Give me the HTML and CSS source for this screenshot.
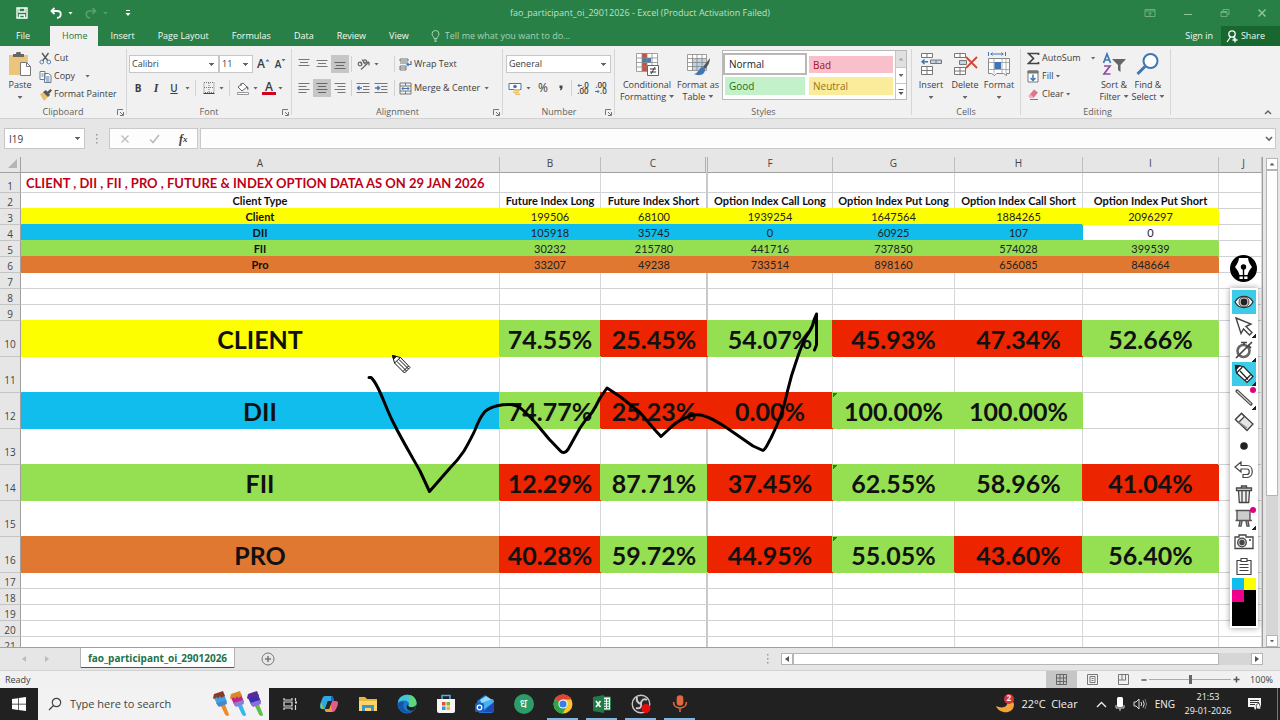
FILE: index.html
```html
<!DOCTYPE html>
<html lang="en">
<head>
<meta charset="utf-8">
<title>fao_participant_oi_29012026 - Excel</title>
<link rel="stylesheet" href="styles.css">
</head>
<body>
<header class="titlebar">
  <div class="quick">
    <button class="btn q-save" aria-label="Save"><svg width="12" height="12" viewBox="0 0 12 12" fill="none" stroke="#fff" stroke-width="1.4"><path d="M1 1h10v10H1zM3 1v4h6V1M3.5 11V8h5v3"/></svg></button>
    <button class="btn q-undo" aria-label="Undo"><svg width="12" height="12" viewBox="0 0 12 12" fill="none" stroke="#fff" stroke-width="1.8"><path d="M4.500 1L1.500 4l3 3M1.500 4H7c5 0 5 6.500 0 7"/></svg></button>
    <span class="caret caret-white"></span>
    <button class="btn q-redo" aria-label="Redo"><svg width="12" height="12" viewBox="0 0 12 12" fill="none" stroke="#5a9f71" stroke-width="1.600"><path d="M7.500 1l3 3-3 3M10.500 4H5C0 4 0 10.500 5 11"/></svg></button>
    <span class="caret caret-dim"></span>
    <button class="btn q-more" aria-label="Customize Quick Access Toolbar"><svg width="6" height="8" viewBox="0 0 6 8" fill="#fff"><path d="M1 1h4v1H1zM.5 4h5L3 7z"/></svg></button>
  </div>
  <h1 class="doc-title">fao_participant_oi_29012026 - Excel (Product Activation Failed)</h1>
  <div class="window-buttons">
    <button class="btn" aria-label="Ribbon Display Options"><svg width="12" height="10" viewBox="0 0 12 10" fill="none" stroke="#6fae83"><path d="M1 1.500h10v7H1zM1 3h10M6 8V4.500M4.500 6L6 4.500 7.500 6"/></svg></button>
    <button class="btn" aria-label="Minimize"><svg width="10" height="10" viewBox="0 0 10 10" stroke="#8fc3a0"><path d="M1 6.500h8"/></svg></button>
    <button class="btn" aria-label="Restore"><svg width="10" height="10" viewBox="0 0 10 10" fill="none" stroke="#6fae83"><path d="M1 3.500h6v5H1zM3 3V1.500h6v5H7.500M1 4.500h6"/></svg></button>
    <button class="btn" aria-label="Close"><svg width="10" height="10" viewBox="0 0 10 10" stroke="#8fc3a0" stroke-width="1.500"><path d="M1.500 1.500l7 7M8.500 1.500l-7 7"/></svg></button>
  </div>
</header>

<nav class="tabs">
  <button class="btn tab tab-file">File</button>
  <button class="btn tab tab-active">Home</button>
  <button class="btn tab">Insert</button>
  <button class="btn tab">Page Layout</button>
  <button class="btn tab">Formulas</button>
  <button class="btn tab">Data</button>
  <button class="btn tab">Review</button>
  <button class="btn tab">View</button>
  <label class="tellme"><svg width="9" height="12" viewBox="0 0 9 12" fill="none" stroke="#a5d2b2"><path d="M3 8.500C3 6.500 1 6 1 4a3.500 3.500 0 0 1 7 0c0 2-2 2.500-2 4.500zM3 10h3M3.500 11.500h2"/></svg><input type="text" aria-label="Tell me" placeholder="Tell me what you want to do..."></label>
  <button class="btn signin">Sign in</button>
  <button class="btn share"><svg width="12" height="13" viewBox="0 0 12 13" fill="none" stroke="#fff" stroke-width="1.300"><circle cx="6" cy="4" r="3.200"/><path d="M4.500 7L1 12M7 7l2 2M9 7.500v5M6.500 10h5"/></svg>Share</button>
</nav>

<section class="ribbon" aria-label="Home ribbon">
  <div class="group g-clipboard">
    <div class="content">
      <button class="btn big w-paste"><svg width="24" height="25" viewBox="0 0 24 25"><path d="M1 3h19v20H1z" fill="#e9c67c"/><path d="M5 5V2h3a2.500 2.500 0 0 1 5 0h3v3z" fill="#666"/><path d="M12.500 10.500h6l4 4v9h-10z" fill="#fff" stroke="#777"/><path d="M18.500 10.500v4h4" fill="none" stroke="#777"/></svg><span>Paste</span><span class="caret"></span></button>
      <div class="stack">
        <button class="btn small"><svg width="13" height="13" viewBox="0 0 13 13" fill="none"><path d="M3 1l6 8M9.500 1l-6 8" stroke="#555" stroke-width="1.300"/><circle cx="2.800" cy="10" r="1.900" stroke="#5c86ad"/><circle cx="9.800" cy="10" r="1.900" stroke="#5c86ad"/></svg>Cut</button>
        <button class="btn small"><svg width="13" height="13" viewBox="0 0 13 13" fill="#fff" stroke="#6d7b88"><path d="M1 1.500h5v8H1zM5.500 3.500h4l2.500 2v7H5.500z"/><path d="M2.500 4h2M2.500 6h2M7 7h3.500M7 9h3.500M7 11h3.500" stroke="#3f76b3"/></svg>Copy<span class="caret caret-gap"></span></button>
        <button class="btn small"><svg width="13" height="13" viewBox="0 0 13 13"><path d="M1 6l4-2 4 5-4 4z" fill="#e9bf72"/><path d="M4 4l3-2 4 5-2 2z" fill="#555"/><path d="M8 4l3.500-3L13 2.500 10 6z" fill="#555"/></svg>Format Painter</button>
      </div>
    </div>
    <div class="group-label">Clipboard<svg class="launch" width="7" height="7" viewBox="0 0 7 7" fill="none" stroke="#777"><path d="M.5 6V.5H6M3 3l3 3M6.500 3v3.500H3"/></svg></div>
  </div>

  <div class="group g-font">
    <div class="content rows">
      <div class="row">
        <select class="sel sel-font" aria-label="Font"><option>Calibri</option></select>
        <select class="sel sel-size" aria-label="Font size"><option>11</option></select>
        <button class="btn ic w17 grow-a" aria-label="Increase font size">A<svg width="5" height="12" viewBox="0 0 5 12"><path d="M.5 3.500L2.500 1l2 2.500z" fill="#3f76b3"/></svg></button>
        <button class="btn ic w17 shrink-a" aria-label="Decrease font size">A<svg width="5" height="12" viewBox="0 0 5 12"><path d="M.5 1h4l-2 2.500z" fill="#3f76b3"/></svg></button>
      </div>
      <div class="row">
        <button class="btn ic w18 letter"><b>B</b></button>
        <button class="btn ic w18 letter"><i>I</i></button>
        <button class="btn ic w18 letter"><u>U</u></button>
        <span class="caret"></span>
        <span class="sep sep-l"></span>
        <button class="btn ic w17" aria-label="Borders"><svg width="12" height="12" viewBox="0 0 12 12" fill="none" stroke="#777"><path d="M1 .5h10v10H1zM6 1v10M1 5.500h10" stroke-dasharray="1 1"/><path d="M.5 11.500h11" stroke="#444"/></svg></button>
        <span class="caret"></span>
        <span class="sep sep-l"></span>
        <button class="btn ic w17" aria-label="Fill color"><svg width="14" height="13" viewBox="0 0 14 13"><path d="M2 5l5-4 4 4-5 4z" fill="#fff" stroke="#666"/><path d="M5 4V1" stroke="#666"/><path d="M10.500 4c3 1 2 4 1.500 4-1 0-1-2-1.500-4" fill="#3f76b3"/><path d="M1.500 10.500h11v2h-11z" fill="#fff" stroke="#999"/></svg></button>
        <span class="caret"></span>
        <button class="btn ic fontcolor" aria-label="Font color">A</button>
        <span class="caret"></span>
      </div>
    </div>
    <div class="group-label">Font<svg class="launch" width="7" height="7" viewBox="0 0 7 7" fill="none" stroke="#777"><path d="M.5 6V.5H6M3 3l3 3M6.500 3v3.500H3"/></svg></div>
  </div>

  <div class="group g-align">
    <div class="content rows">
      <div class="row">
        <button class="btn ic w18" aria-label="Top align"><svg width="12" height="12" viewBox="0 0 12 12" stroke="#777"><path d="M.5 1.500h11M2 4.500h8M.5 7.500h11"/></svg></button>
        <button class="btn ic w18" aria-label="Middle align"><svg width="12" height="12" viewBox="0 0 12 12" stroke="#777"><path d="M.5 2.500h11M2 5.500h8M.5 8.500h11"/></svg></button>
        <button class="btn ic w18 on" aria-label="Bottom align"><svg width="12" height="12" viewBox="0 0 12 12" stroke="#666"><path d="M.5 4.500h11M2 7.500h8M.5 10.500h11"/></svg></button>
        <span class="sep"></span>
        <button class="btn ic w18" aria-label="Orientation"><svg width="13" height="12" viewBox="0 0 13 12" fill="none" stroke="#666" stroke-width="1.200"><path d="M4 11.500L12 4M12 4v3.500M12 4H8.500"/><circle cx="3" cy="6" r="1.800"/><path d="M5 7L3.500 4M5 1.500l3.500 5"/><circle cx="8" cy="3.500" r="1.600"/></svg></button>
        <span class="caret"></span>
        <span class="sep sep-r"></span>
        <button class="btn ic text-btn"><svg width="13" height="13" viewBox="0 0 13 13" fill="none" stroke="#777"><path d="M1 1h8v2H1zM1 5h8M1 8h6v4H1zM1 10h6"/><path d="M12 3v3.500H8M9.500 5L8 6.500 9.500 8" stroke="#3f76b3" stroke-width="1.200"/></svg>Wrap Text</button>
      </div>
      <div class="row">
        <button class="btn ic w18" aria-label="Align left"><svg width="12" height="12" viewBox="0 0 12 12" stroke="#777"><path d="M.5 1.500h11M.5 4.500h8M.5 7.500h11M.5 10.500h8"/></svg></button>
        <button class="btn ic w18 on" aria-label="Center"><svg width="12" height="12" viewBox="0 0 12 12" stroke="#666"><path d="M.5 1.500h11M2 4.500h8M.5 7.500h11M2 10.500h8"/></svg></button>
        <button class="btn ic w18" aria-label="Align right"><svg width="12" height="12" viewBox="0 0 12 12" stroke="#777"><path d="M.5 1.500h11M3.500 4.500h8M.5 7.500h11M3.500 10.500h8"/></svg></button>
        <span class="sep"></span>
        <button class="btn ic w18" aria-label="Decrease indent"><svg width="14" height="12" viewBox="0 0 14 12" stroke="#777"><path d="M.5 1.500h13M7 4.500h6.500M7 7.500h6.500M.5 10.500h13"/><path d="M6 6H1.500M3.500 4l-2 2 2 2" fill="none" stroke="#3f76b3" stroke-width="1.400"/></svg></button>
        <button class="btn ic w18" aria-label="Increase indent"><svg width="14" height="12" viewBox="0 0 14 12" stroke="#777"><path d="M.5 1.500h13M7 4.500h6.500M7 7.500h6.500M.5 10.500h13"/><path d="M1 6h4.500M3.500 4l2 2-2 2" fill="none" stroke="#3f76b3" stroke-width="1.400"/></svg></button>
        <span class="sep sep-m"></span>
        <button class="btn ic text-btn"><svg width="13" height="13" viewBox="0 0 13 13" fill="none" stroke="#777"><path d="M1 1h11v11H1zM1 4h11M1 9h11M6.500 1v3M6.500 9v3"/><path d="M3 6.500h7M4.500 5L3 6.500 4.500 8M8.500 5L10 6.500 8.500 8" stroke="#3f76b3"/></svg>Merge &amp; Center<span class="caret caret-gap"></span></button>
      </div>
    </div>
    <div class="group-label">Alignment<svg class="launch" width="7" height="7" viewBox="0 0 7 7" fill="none" stroke="#777"><path d="M.5 6V.5H6M3 3l3 3M6.500 3v3.500H3"/></svg></div>
  </div>

  <div class="group g-number">
    <div class="content rows">
      <div class="row"><select class="sel sel-num" aria-label="Number format"><option>General</option></select></div>
      <div class="row">
        <button class="btn ic w18" aria-label="Accounting format"><svg width="14" height="13" viewBox="0 0 14 13"><path d="M1 1.500h12v6H1z" fill="#fff" stroke="#3f76b3"/><circle cx="7" cy="4.500" r="1.800" fill="#3f76b3"/><path d="M6 7h6v2H6zM5 9.500h6V11H5zM7 11.500h5V13H7z" fill="#e9bf72"/></svg></button>
        <span class="caret"></span>
        <button class="btn ic w18 pct">%</button>
        <button class="btn ic w17 comma" aria-label="Comma style"><svg width="4" height="6" viewBox="0 0 4 6"><path d="M.5.5h3v2C3.500 4 2.500 5 1 5.500L1.500 3h-1z" fill="#444"/></svg></button>
        <span class="sep"></span>
        <button class="btn ic w18 dec" aria-label="Increase decimal"><span><svg width="5" height="5" viewBox="0 0 5 5" fill="none" stroke="#3f76b3"><path d="M5 2.500H1M2.500 1L1 2.500 2.500 4"/></svg>.0</span><span>.00</span></button>
        <button class="btn ic w18 dec" aria-label="Decrease decimal"><span>.00</span><span><svg width="5" height="5" viewBox="0 0 5 5" fill="none" stroke="#3f76b3"><path d="M0 2.500h4M2.500 1L4 2.500 2.500 4"/></svg>.0</span></button>
      </div>
    </div>
    <div class="group-label">Number<svg class="launch" width="7" height="7" viewBox="0 0 7 7" fill="none" stroke="#777"><path d="M.5 6V.5H6M3 3l3 3M6.500 3v3.500H3"/></svg></div>
  </div>

  <div class="group g-styles">
    <div class="content">
      <button class="btn big w-cf"><svg width="25" height="25" viewBox="0 0 25 25"><path d="M1.500 1.500h21v18h-21z" fill="#fff"/><path d="M7 1h5v5H7zM7 11h5v8H7z" fill="#c9523f"/><path d="M7 6h9v5H7z" fill="#4b7ba8"/><path d="M1.500 1.500h21v18h-21zM1.500 6h21M1.500 10.500h21M1.500 15h21M7 1.500v18M12 1.500v18M17 1.500v18" fill="none" stroke="#8b8b8b" stroke-width=".8"/><path d="M12.500 13.500h11v10h-11z" fill="#fff" stroke="#666"/><path d="M15 17h6M15 20h6M20 15l-4 7" stroke="#333"/></svg><span>Conditional</span><span>Formatting<span class="caret"></span></span></button>
      <button class="btn big w-ft"><svg width="25" height="25" viewBox="0 0 25 25"><path d="M1.500 2.500h19v16h-19z" fill="#fff"/><path d="M6 7h14v11H6z" fill="#bcd2e6"/><path d="M1.500 2.500h19v16h-19zM1.500 6.500h19M1.500 10.500h19M1.500 14.500h19M6.500 2.500v16M11 2.500v16M16 2.500v16" fill="none" stroke="#858585" stroke-width=".8"/><path d="M24 6l-7 9 2 2c3-3 5-7 5-11" fill="#555"/><path d="M17 15c-4 0-4 6-9 7 4 2 11 2 11-5z" fill="#3f76b3"/></svg><span>Format as</span><span>Table<span class="caret"></span></span></button>
      <div class="gallery">
        <div class="swatches">
          <button class="btn sw normal">Normal</button><button class="btn sw bad">Bad</button>
          <button class="btn sw good">Good</button><button class="btn sw neutral">Neutral</button>
        </div>
        <div class="gal-scroll">
          <button class="btn off" aria-label="Scroll up"><span class="caret up"></span></button>
          <button class="btn" aria-label="Scroll down"><span class="caret"></span></button>
          <button class="btn" aria-label="More styles"><svg width="6" height="8" viewBox="0 0 6 8" fill="#555"><path d="M.5 1h5v1h-5zM.5 4h5L3 7z"/></svg></button>
        </div>
      </div>
    </div>
    <div class="group-label">Styles</div>
  </div>

  <div class="group g-cells">
    <div class="content">
      <button class="btn big w34"><svg width="24" height="25" viewBox="0 0 24 25" fill="#fff" stroke="#777"><path d="M2.500 1.500h11v4h-11zM8 1.500v4M2.500 14.500h11v8h-11zM8 14.500v8M2.500 18.500h11"/><path d="M11.500 8h11v3.500h-11zM17 8v3.500" fill="#c3d4e4"/><path d="M9 9.700H3M5.500 7.500L3 9.700 5.500 12" fill="none" stroke="#3f76b3" stroke-width="1.400"/></svg><span>Insert</span><span class="caret"></span></button>
      <button class="btn big w34"><svg width="26" height="25" viewBox="0 0 26 25" fill="#fff" stroke="#777"><path d="M2.500 1.500h11v4h-11zM8 1.500v4M2.500 15.500h11v7h-11zM8 15.500v7M2.500 19h11"/><path d="M7.500 8.500h7v4h-7z" fill="#c3d4e4"/><path d="M14 5l11 11M25 5L14 16" stroke="#cf4a38" stroke-width="1.800"/></svg><span>Delete</span><span class="caret"></span></button>
      <button class="btn big w34"><svg width="25" height="25" viewBox="0 0 25 25"><path d="M1.500 6.500h21v15h-3v2l-3-2h-7l-2 2-3-2h-3z" fill="#fff" stroke="#888"/><path d="M1.500 10.500h21M1.500 17.500h21M7 6.500v15M15 6.500v15M19 6.500v15" stroke="#999" stroke-width=".8"/><path d="M7.500 10h6.500v7H7.500z" fill="#3f76b3"/><path d="M1.500 0v4M18.500 0v4M3.500 2h13M5.500.5L4 2l1.500 1.500M14.500.5L16 2l-1.500 1.500" fill="none" stroke="#3f76b3"/></svg><span>Format</span><span class="caret"></span></button>
    </div>
    <div class="group-label">Cells</div>
  </div>

  <div class="group g-edit">
    <div class="content">
      <div class="stack stack-edit">
        <button class="btn small"><svg width="13" height="13" viewBox="0 0 13 13" fill="none" stroke="#444" stroke-width="1.700"><path d="M11.500 3V1.500H1.500l5 5-5 5h10V10"/></svg>AutoSum<span class="caret caret-gap"></span></button>
        <button class="btn small"><svg width="13" height="13" viewBox="0 0 13 13" fill="#fff" stroke="#777"><path d="M1 1h10v11H1z"/><path d="M1 1h10v2H1z" fill="#777"/><path d="M6 4.500v6M3.500 8L6 10.500 8.500 8" fill="none" stroke="#3f76b3" stroke-width="1.500"/></svg>Fill<span class="caret"></span></button>
        <button class="btn small"><svg width="13" height="13" viewBox="0 0 13 13"><path d="M1.500 8L7 1.500l4 3L6.500 10H3z" fill="#e0748c"/><path d="M1.500 8L3 6.300 7 9.500 6.500 10H3z" fill="#f0b3bf"/><path d="M3 11.500h8" stroke="#777"/></svg>Clear<span class="caret"></span></button>
      </div>
      <button class="btn big w34"><svg width="25" height="25" viewBox="0 0 25 25" fill="none"><path d="M1.500 11L5 2l3.500 9M2.700 8h4.600" stroke="#3f76b3" stroke-width="1.700"/><path d="M2 14h6l-6 8h6.500" stroke="#8d4bab" stroke-width="1.700"/><path d="M10 7h14l-5.500 6v7L16 18v-5z" fill="#666"/></svg><span>Sort &amp;</span><span>Filter<span class="caret"></span></span></button>
      <button class="btn big w34"><svg width="24" height="25" viewBox="0 0 24 25"><circle cx="14.500" cy="9" r="7" fill="#fff" stroke="#3f76b3" stroke-width="2"/><path d="M9 14.500L1.500 22" stroke="#3f76b3" stroke-width="3"/></svg><span>Find &amp;</span><span>Select<span class="caret"></span></span></button>
    </div>
    <div class="group-label">Editing</div>
  </div>
  <button class="btn collapse" aria-label="Collapse the ribbon"><svg width="8" height="6" viewBox="0 0 8 6" fill="none" stroke="#666" stroke-width="1.500"><path d="M1 5l3-3 3 3"/></svg></button>
</section>

<div class="formula-bar">
  <select class="sel namebox" aria-label="Name box"><option>I19</option></select>
  <svg class="dots" width="4" height="12" viewBox="0 0 4 12" fill="#999"><path d="M1 1h1.500v1.500H1zM1 5h1.500v1.500H1zM1 9h1.500v1.500H1z"/></svg>
  <div class="fx-buttons">
    <button class="btn" aria-label="Cancel"><svg width="10" height="10" viewBox="0 0 10 10" stroke="#bcbcbc" stroke-width="1.300"><path d="M1.500 1.500l7 7M8.500 1.500l-7 7"/></svg></button>
    <button class="btn" aria-label="Enter"><svg width="11" height="10" viewBox="0 0 11 10" fill="none" stroke="#bcbcbc" stroke-width="1.700"><path d="M1 5.500L4 8.500 10 1"/></svg></button>
    <button class="btn fx" aria-label="Insert function">f<small>x</small></button>
  </div>
  <label class="formula"><input type="text" aria-label="Formula"><svg width="8" height="6" viewBox="0 0 8 6" fill="none" stroke="#666" stroke-width="1.600"><path d="M1 1l3 3 3-3"/></svg></label>
</div>

<main class="workbook">
  <div class="sheet">
    <table class="grid">
      <colgroup><col class="c-h"><col class="c-a"><col class="c-b"><col class="c-c"><col class="c-f"><col class="c-g"><col class="c-hh"><col class="c-i"><col></colgroup>
      <thead><tr><th class="corner"><svg width="10" height="10" viewBox="0 0 10 10"><path d="M9 0v9H0z" fill="#b5b5b5"/></svg></th><th>A</th><th>B</th><th class="dbl">C</th><th>F</th><th>G</th><th>H</th><th>I</th><th class="last">J</th></tr></thead>
      <tbody>
        <tr class="r-title"><th>1</th><td class="title">CLIENT , DII , FII , PRO , FUTURE &amp; INDEX OPTION DATA AS ON 29 JAN 2026</td><td></td><td class="dbl"></td><td></td><td></td><td></td><td></td><td></td></tr>
        <tr class="heads"><th>2</th><td>Client Type</td><td>Future Index Long</td><td class="dbl">Future Index Short</td><td>Option Index Call Long</td><td>Option Index Put Long</td><td>Option Index Call Short</td><td>Option Index Put Short</td><td></td></tr>
        <tr><th>3</th><td class="y b">Client</td><td class="y">199506</td><td class="y">68100</td><td class="y">1939254</td><td class="y">1647564</td><td class="y">1884265</td><td class="y">2096297</td><td></td></tr>
        <tr><th>4</th><td class="c b">DII</td><td class="c">105918</td><td class="c">35745</td><td class="c">0</td><td class="c">60925</td><td class="c">107</td><td>0</td><td></td></tr>
        <tr><th>5</th><td class="g b">FII</td><td class="g">30232</td><td class="g">215780</td><td class="g">441716</td><td class="g">737850</td><td class="g">574028</td><td class="g">399539</td><td></td></tr>
        <tr><th>6</th><td class="o b">Pro</td><td class="o">33207</td><td class="o">49238</td><td class="o">733514</td><td class="o">898160</td><td class="o">656085</td><td class="o">848664</td><td></td></tr>
        <tr><th>7</th><td></td><td></td><td class="dbl"></td><td></td><td></td><td></td><td></td><td></td></tr>
        <tr><th>8</th><td></td><td></td><td class="dbl"></td><td></td><td></td><td></td><td></td><td></td></tr>
        <tr><th>9</th><td></td><td></td><td class="dbl"></td><td></td><td></td><td></td><td></td><td></td></tr>
        <tr class="tall"><th>10</th><td class="y">CLIENT</td><td class="g">74.55%</td><td class="r">25.45%</td><td class="g">54.07%</td><td class="r flag">45.93%</td><td class="r">47.34%</td><td class="g">52.66%</td><td></td></tr>
        <tr class="tall"><th>11</th><td></td><td></td><td class="dbl"></td><td></td><td></td><td></td><td></td><td></td></tr>
        <tr class="tall"><th>12</th><td class="c">DII</td><td class="g">74.77%</td><td class="r">25.23%</td><td class="r">0.00%</td><td class="g flag">100.00%</td><td class="g">100.00%</td><td></td><td></td></tr>
        <tr class="tall"><th>13</th><td></td><td></td><td class="dbl"></td><td></td><td></td><td></td><td></td><td></td></tr>
        <tr class="tall"><th>14</th><td class="g">FII</td><td class="r">12.29%</td><td class="g">87.71%</td><td class="r">37.45%</td><td class="g flag">62.55%</td><td class="g">58.96%</td><td class="r">41.04%</td><td></td></tr>
        <tr class="tall"><th>15</th><td></td><td></td><td class="dbl"></td><td></td><td></td><td></td><td></td><td></td></tr>
        <tr class="tall"><th>16</th><td class="o">PRO</td><td class="r">40.28%</td><td class="g">59.72%</td><td class="r">44.95%</td><td class="g flag">55.05%</td><td class="r">43.60%</td><td class="g">56.40%</td><td></td></tr>
        <tr><th>17</th><td></td><td></td><td class="dbl"></td><td></td><td></td><td></td><td></td><td></td></tr>
        <tr><th>18</th><td></td><td></td><td class="dbl"></td><td></td><td></td><td></td><td></td><td></td></tr>
        <tr><th>19</th><td></td><td></td><td class="dbl"></td><td></td><td></td><td></td><td></td><td></td></tr>
        <tr><th>20</th><td></td><td></td><td class="dbl"></td><td></td><td></td><td></td><td></td><td></td></tr>
        <tr><th>21</th><td></td><td></td><td class="dbl"></td><td></td><td></td><td></td><td></td><td></td></tr>
      </tbody>
    </table>
  </div>
  <div class="vscroll">
    <button class="btn sb" aria-label="Scroll up"><span class="caret up"></span></button>
    <div class="vtrack"><div class="vthumb"></div></div>
    <button class="btn sb" aria-label="Scroll down"><span class="caret"></span></button>
  </div>

  <svg class="ink" width="480" height="200" viewBox="360 300 480 200" fill="none" stroke="#000" stroke-width="3" stroke-linecap="round" stroke-linejoin="round"><path d="M369 377.500L371 377.500C374 380 376 384 378 388C383 398 387 410 393 422C402 440 411 455 420 471L429.500 491.500L450 468C455 463 460 457 464 451C468 444 472 437 475 430C478 422 481 416 485 411.500C491 406 503 404 511 404.500C518 405.500 521 408 526 413C531 418 535 422 539 427L549 439L560 450.500Q564 455 568 449.500L580 428L587 418C592 415 597 404 600 398L607 388L620 396.500L640 412.500L655 430L661 436.500L668 430C673 425 678 421 683 419C692 414 701 414 707 417C714 419 720 424 727 428L753 446L763 450.500C766 449 768 443 771 438C778 424 784 408 787 393C790 380 793 370 797 359C800 350 803 342 806 337C810 330 813 328 814 320L816.500 314V345L814.500 350"/></svg>
  <svg class="cursor" width="21" height="21" viewBox="0 0 21 21" fill="#fff" stroke="#111" stroke-linejoin="round"><path d="M1.500 1.500l8 2 9.500 10-5.500 5.500L3.500 9z"/><path d="M3.500 9l6-5.500M6 7.500l9.500 9.500M8 5.500L17.500 15M12 17.500l5.500-5.500" fill="none"/><path d="M1.500 1.500l4 1-3 2.500z" fill="#111"/></svg>

  <svg class="nib" width="27" height="27" viewBox="0 0 27 27"><circle cx="13.500" cy="13.500" r="13.500"/><path d="M9 3h9c.5 4 2 6.500 4 9-3 3.500-4 6-4.500 8h-8C9 18 8 15.500 5 12c2-2.500 3.500-5 4-9zM9.500 21.500h8V24h-8z" fill="#fff"/><circle cx="13.500" cy="12" r="2.700"/><path d="M13.500 12v12" stroke="#000" stroke-width="1.400"/></svg>
  <div class="pen-tools" role="toolbar" aria-label="Pen tools">
    <button class="btn tool lit" aria-label="Show ink"><svg width="20" height="16" viewBox="0 0 20 16"><path d="M1 8c4-7.500 14-7.500 18 0-4 7.500-14 7.500-18 0z" fill="#fff" stroke="#333" stroke-width="1.300"/><circle cx="10" cy="8" r="5" fill="#ddd" stroke="#444"/><circle cx="10" cy="8" r="3.400" fill="#222"/></svg></button>
    <button class="btn tool more" aria-label="Select"><svg width="20" height="20" viewBox="0 0 20 20" fill="#fff" stroke="#444" stroke-width="1.400"><path d="M2 2l15 6-5 2.500 6 6-2.500 2.500-6-6-2.500 4.500z"/></svg></button>
    <button class="btn tool more" aria-label="Timer"><svg width="20" height="20" viewBox="0 0 20 20" fill="none" stroke="#444"><circle cx="9.500" cy="11" r="6" stroke-width="2.600" stroke="#666"/><path d="M7 2.500h6M10 3v2M14 5l3 3" stroke-width="1.700"/><path d="M2 18L18 2" stroke-width="1.700"/></svg></button>
    <button class="btn tool lit more" aria-label="Pencil"><svg width="20" height="20" viewBox="0 0 20 20" fill="#fff" stroke="#222" stroke-width="1.200"><path d="M1.500 1.500l8 1 9.500 10-6 6L2.500 9z"/><path d="M2.500 9l6-6M6 7l8 8.500M11 16.500l5.500-5.500" fill="none"/><path d="M1.500 1.500h4l-3.500 4z" fill="#222"/></svg></button>
    <button class="btn tool more dot" aria-label="Line"><svg width="20" height="20" viewBox="0 0 20 20" fill="none"><path d="M3 3l14 13" stroke="#444" stroke-width="3.200" stroke-linecap="round"/><path d="M3 3l14 13" stroke="#ccc" stroke-width="1.200"/></svg></button>
    <button class="btn tool" aria-label="Eraser"><svg width="20" height="20" viewBox="0 0 20 20" fill="#e6e6e6" stroke="#444" stroke-width="1.300"><path d="M1.500 7.500l6-6L19 12l-6 6.500z"/><path d="M1.500 7.500l6-6 3 3-6 6z" fill="#fff"/><path d="M4.500 10l8.500 6" stroke="#888"/></svg></button>
    <button class="btn tool" aria-label="Pen size"><svg width="8" height="8" viewBox="0 0 8 8"><circle cx="4" cy="4" r="3.800" fill="#222"/></svg></button>
    <button class="btn tool" aria-label="Undo ink"><svg width="20" height="18" viewBox="0 0 20 18" fill="#fff" stroke="#444" stroke-width="1.200"><path d="M1 6l6-5v3.500h6c7 0 7 12 0 12H9v-3h4c3 0 3-5.500 0-5.500H7v3z"/></svg></button>
    <button class="btn tool" aria-label="Delete ink"><svg width="18" height="19" viewBox="0 0 18 19" fill="#eee" stroke="#444" stroke-width="1.300"><path d="M3.500 5.500h11l-.8 12H4.300zM1.500 3h15v2.500h-15zM6.500 3V1h5v2M7 6v11M11 6v11"/></svg></button>
    <button class="btn tool more dot" aria-label="Whiteboard"><svg width="20" height="20" viewBox="0 0 20 20" fill="#ccc" stroke="#555" stroke-width="1.400"><path d="M3 2.500h13v10H3zM1.500 2.500H3M16 12.500h2M1.500 12.500H3M6 13l-1 5h2l1-5M12 13l1 5h2l-1-5"/></svg></button>
    <button class="btn tool" aria-label="Screenshot"><svg width="20" height="16" viewBox="0 0 20 16" fill="#fff" stroke="#444" stroke-width="1.300"><path d="M1 3h4V1h7v2h7v11.500H1z"/><circle cx="8" cy="8.500" r="4.300" fill="#ccc"/><circle cx="8" cy="8.500" r="2" fill="#444"/><path d="M15 6h2"/></svg></button>
    <button class="btn tool" aria-label="Clipboard"><svg width="18" height="19" viewBox="0 0 18 19" fill="#fff" stroke="#444" stroke-width="1.200"><path d="M2 3.500h14v14H2z"/><path d="M6 1.500h6v3H6zM4.500 7.500h9M4.500 10.500h9M4.500 13.500h9"/></svg></button>
    <div class="inks"><span class="ink-cyan"></span><span class="ink-yellow"></span><span class="ink-pink"></span></div>
  </div>
</main>

<div class="sheet-bar">
  <div class="sheet-nav"><svg width="4" height="6" viewBox="0 0 4 6" fill="#bbb"><path d="M4 0v6L0 3z"/></svg><svg width="4" height="6" viewBox="0 0 4 6" fill="#bbb"><path d="M0 0v6l4-3z"/></svg></div>
  <button class="btn sheet-tab">fao_participant_oi_29012026</button>
  <button class="btn add-sheet" aria-label="New sheet"><svg width="14" height="14" viewBox="0 0 14 14" fill="none" stroke="#777"><circle cx="7" cy="7" r="6"/><path d="M7 4v6M4 7h6" stroke-width="1.500"/></svg></button>
  <svg class="hdots" width="4" height="12" viewBox="0 0 4 12" fill="#999"><path d="M1 1h1.500v1.500H1zM1 5h1.500v1.500H1zM1 9h1.500v1.500H1z"/></svg>
  <div class="hscroll">
    <button class="btn sb" aria-label="Scroll left"><svg width="4" height="6" viewBox="0 0 4 6" fill="#555"><path d="M4 0v6L0 3z"/></svg></button>
    <div class="htrack"><div class="hthumb"></div></div>
    <button class="btn sb" aria-label="Scroll right"><svg width="4" height="6" viewBox="0 0 4 6" fill="#555"><path d="M0 0v6l4-3z"/></svg></button>
  </div>
</div>

<div class="status">
  <span class="ready">Ready</span>
  <button class="btn view on" aria-label="Normal view"><svg width="11" height="11" viewBox="0 0 11 11" fill="none" stroke="#666"><path d="M.5.5h10v10H.5zM.5 4h10M.5 7.500h10M4 .5v10M7.500.5v10"/></svg></button>
  <button class="btn view" aria-label="Page layout view"><svg width="11" height="11" viewBox="0 0 11 11" fill="none" stroke="#777"><path d="M.5.5h10v10H.5zM3 2.500h5v6H3zM4.500 4.500h2M4.500 6.500h2"/></svg></button>
  <button class="btn view" aria-label="Page break view"><svg width="11" height="11" viewBox="0 0 11 11" fill="none" stroke="#777"><path d="M.5.5h10v10H.5zM4 .5v5.500M7.500.5V6M.5 6H8"/></svg></button>
  <button class="btn zoom-b" aria-label="Zoom out"><svg width="6" height="6" viewBox="0 0 6 6"><path d="M.5 3h5" stroke="#555" stroke-width="1.500"/></svg></button>
  <input class="zoom" type="range" aria-label="Zoom" min="0" max="100" value="50">
  <button class="btn zoom-b" aria-label="Zoom in"><svg width="7" height="7" viewBox="0 0 7 7"><path d="M.5 3.500h6M3.500.5v6" stroke="#555" stroke-width="1.500"/></svg></button>
  <span class="zoom-pct">100%</span>
</div>

<footer class="taskbar">
  <button class="btn start" aria-label="Start"><svg width="14" height="14" viewBox="0 0 14 14" fill="#fff"><path d="M0 2l6-.8v5.500H0zM6.700 1.100L14 0v6.700H6.700zM0 7.400h6v5.500L0 12zM6.700 7.400H14V14l-7.300-1.100z"/></svg></button>
  <label class="search"><svg width="14" height="14" viewBox="0 0 14 14" fill="none" stroke="#444" stroke-width="1.200"><circle cx="8.500" cy="5.500" r="4.200"/><path d="M5.500 8.500L1 13"/></svg><input type="text" placeholder="Type here to search" aria-label="Search">
    <svg width="52" height="28" viewBox="0 0 52 28"><g><path d="M8 14l5 10.500q3 3 4 0L12 12z" fill="#f08a24"/><path d="M2 8l10-4 3 8-9 4z" fill="#3ca7e0"/><path d="M1 8l1-4 9-3 2 5-4 2-1-2-2 3-1-2-3 2z" fill="#8a3b2e"/><path d="M4 13l10-3 1 4-8 3z" fill="#4a86cf"/></g><g transform="translate(17)"><path d="M8 14l5 10.500q3 3 4 0L12 12z" fill="#36b7e8"/><path d="M2 8l10-4 3 8-9 4z" fill="#c82382"/><path d="M1 8l1-4 9-3 2 5-4 2-1-2-2 3-1-2-3 2z" fill="#d88b25"/><path d="M4 13l10-3 1 4-8 3z" fill="#8a7ddd"/></g><g transform="translate(34)"><path d="M8 14l5 10.500q3 3 4 0L12 12z" fill="#5fbf4a"/><path d="M2 8l10-4 3 8-9 4z" fill="#3232ac"/><path d="M1 8l1-4 9-3 2 5-4 2-1-2-2 3-1-2-3 2z" fill="#5a2a9c"/><path d="M4 13l10-3 1 4-8 3z" fill="#8d6be0"/></g></svg></label>
  <div class="apps">
    <button class="btn app" aria-label="Task view"><svg width="14" height="14" viewBox="0 0 14 14" fill="none" stroke="#ddd" stroke-width="1.200"><path d="M1 1v2h8V1M1 5h8v4H1zM1 13v-2h8v2M12.500 1v3M12.500 8v5"/><path d="M12 5.500h2" stroke-width="2"/></svg></button>
    <button class="btn app" aria-label="Copilot"><svg width="20" height="20" viewBox="0 0 20 20"><path d="M6 2h6c2 0 2 1 2.500 3L15 7H9L6 15H3c-3 0-2-4-1-7s2-6 4-6z" fill="#2fa8dc"/><path d="M2 8l3 7c-3 1-4-2-3-7z" fill="#8ac94a"/><path d="M14 18H8c-2 0-2-1-2.500-3H10l3-8h4c3 0 2 4 1 6s-2 5-4 5z" fill="#e25a8a"/><path d="M6 15h4l2-5 1 8H8c-1.500 0-1.700-1-2-3z" fill="#f29a3a"/><path d="M12 2c2 0 2.500 2 3 5h-3z" fill="#3656d4"/><path d="M9 7h4l-3 8H6z" fill="#262626"/></svg></button>
    <button class="btn app" aria-label="File Explorer"><svg width="18" height="16" viewBox="0 0 18 16"><path d="M0 1h6l2 2h10v12H0z" fill="#e9b53a"/><path d="M0 5h18v10H0z" fill="#fbd669"/><path d="M3 9h12v6h-3v-3H6v3H3z" fill="#3f95cf"/></svg></button>
    <button class="btn app" aria-label="Edge"><svg width="20" height="20" viewBox="0 0 20 20"><circle cx="10" cy="10" r="9.500" fill="#1c77c9"/><path d="M.8 9C2-2 19-2 19.500 9c0 5-7 5-8 3 2-3-1-5.500-4-5.500C4 6.500 1 8 .8 9z" fill="#41c6d8"/><path d="M13 1c5 2 7 6 6.300 9.500-1 3-6.500 3.500-7.800 1.500C13 9 12 5 13 1z" fill="#5fd67a"/><path d="M7 9c-3 5 2 10 8.500 8C10 21 1 18 1 10c2-3 6-3 6-1z" fill="#1555a5"/><path d="M11.500 12c1.300 2 6.800 1.500 7.800-1.500-.3 3-1.800 5-3 6-4 1-8-1-6-6z" fill="#212121"/></svg></button>
    <button class="btn app" aria-label="Store"><svg width="20" height="20" viewBox="0 0 20 20"><path d="M6 6V1.500h8V6" fill="none" stroke="#43b5e6" stroke-width="1.500"/><path d="M1 5h18v12q0 2-2 2H3q-2 0-2-2z" fill="#f5f5f5"/><path d="M6 8h3.500v3.500H6z" fill="#e5502f"/><path d="M10.500 8H14v3.500h-3.500z" fill="#7cb928"/><path d="M6 12.500h3.500V16H6z" fill="#1e9fdc"/><path d="M10.500 12.500H14V16h-3.500z" fill="#f7b71b"/></svg></button>
    <button class="btn app" aria-label="Outlook"><svg width="20" height="20" viewBox="0 0 20 20"><path d="M2 7l8-6 9 6v9q0 3-3 3H4z" fill="#2173d6"/><path d="M5 6l6-4 6 4-9 6z" fill="#8fdcf7"/><path d="M3 10l15-5 1 3-12 9z" fill="#49b0ee"/><path d="M19 8v10H8z" fill="#2348b8"/><rect y="9" width="9" height="9" rx="1.500" fill="#1a5cc0"/><circle cx="4.500" cy="13.500" r="2.300" fill="none" stroke="#fff" stroke-width="1.300"/></svg></button>
    <button class="btn app"><span class="dhan">ध</span></button>
    <button class="btn app run" aria-label="Chrome"><svg width="20" height="20" viewBox="0 0 20 20"><circle cx="10" cy="10" r="9.500" fill="#f9c52b"/><path d="M10 10L1.800 5.200a9.500 9.500 0 0 1 16.500.3H10z" fill="#e24334"/><path d="M10 10l-8.200-4.800A9.500 9.500 0 0 0 9.500 19.500L14 12z" fill="#2ba24c"/><circle cx="10" cy="10" r="4.600" fill="#fff"/><circle cx="10" cy="10" r="3.600" fill="#3b7de8"/></svg></button>
    <button class="btn app run" aria-label="Excel"><svg width="20" height="18" viewBox="0 0 20 18"><path d="M10 2h8.500v13H10z" fill="#f3f8f4" stroke="#2c8150"/><path d="M12 5h2M15 5h2M12 7.500h2M15 7.500h2M12 10h2M15 10h2M12 12.500h2M15 12.500h2" stroke="#2c8150" stroke-width="1.300"/><path d="M1 2l11-2v18L1 16z" fill="#1f7a45"/><path d="M4 6l4.500 6M8.500 6L4 12" stroke="#fff" stroke-width="1.600"/></svg></button>
    <button class="btn app run" aria-label="OBS"><svg width="20" height="20" viewBox="0 0 20 20"><circle cx="10" cy="10" r="8.800" fill="#2a2729" stroke="#c9c9c9" stroke-width="1.400"/><path d="M6 3c-1 4 1 6 4 7M16 6c-3-2-6 0-6 4M5 14c4 1 6-1 5-4" fill="none" stroke="#c9c9c9" stroke-width="2"/><circle cx="15" cy="14.500" r="4.500" fill="#e60d0d"/></svg></button>
    <button class="btn app run" aria-label="Voice recorder"><svg width="16" height="18" viewBox="0 0 16 18" fill="none" stroke="#e0693d" stroke-width="1.600"><rect x="5.500" y="1" width="5" height="9" rx="2.500" fill="#e0693d"/><path d="M1.500 7c0 8 13 8 13 0M8 13v4"/></svg></button>
  </div>
  <div class="tray">
    <button class="btn weather"><svg width="20" height="20" viewBox="0 0 20 20"><path d="M12 3c3 11-5 12-11 9 3 8 17 9 18-1 0-3-2-6-7-8z" fill="#f2a33a"/><circle cx="14" cy="5" r="5" fill="#d13438"/></svg><span class="badge">2</span>22°C&ensp;Clear</button>
    <button class="btn t-up" aria-label="Show hidden icons"><svg width="11" height="7" viewBox="0 0 11 7" fill="none" stroke="#eee" stroke-width="1.300"><path d="M1 6l4.500-4.500L10 6"/></svg></button>
    <button class="btn" aria-label="Microphone"><svg width="10" height="14" viewBox="0 0 10 14"><rect x="2" width="6" height="10" rx="1.500" fill="#fff"/><path d="M1 8v3h8V8M5 11v3" fill="none" stroke="#ddd"/></svg></button>
    <button class="btn" aria-label="Volume"><svg width="14" height="12" viewBox="0 0 14 12" fill="none" stroke="#ddd"><path d="M1 4h2l3-3v10L3 8H1zM8 4q1.500 2 0 4M10 2.500q2.500 3.500 0 7"/><path d="M12 1q3 5 0 10" stroke="#777"/></svg></button>
    <button class="btn lang">ENG</button>
    <button class="btn clock"><span>21:53</span><span>29-01-2026</span></button>
    <button class="btn notif" aria-label="Notifications"><svg width="14" height="14" viewBox="0 0 14 14"><path d="M0 1h13v9H9l-2 3-1-3H0z" fill="#f5f5f5"/><path d="M2 3.500h9M2 5.500h9M2 7.500h5" stroke="#333"/><path d="M8 8l3-2 2 6H9z" fill="#f5f5f5" stroke="#222" stroke-width=".7"/></svg></button>
  </div>
</footer>
</body>
</html>
```
FILE: styles.css
```css
* { box-sizing: border-box; }
html, body { height: 100%; }
body {
  margin: 0;
  display: flex;
  flex-direction: column;
  overflow: hidden;
  font: 9px/12px "Open Sans", "Noto Sans", sans-serif;
  color: #3c3c3c;
  background: #e6e6e6;
}
.btn {
  border: 0; margin: 0; padding: 0;
  background: none;
  font: inherit; color: inherit;
  display: flex; align-items: center; justify-content: center;
  white-space: nowrap;
}
svg { display: block; flex: none; }
input, select { font: inherit; color: inherit; border: 0; padding: 0; margin: 0; outline: 0; background: none; min-width: 0; }

.caret {
  display: inline-block; flex: none;
  width: 5px; height: 3px;
  background: #666;
  clip-path: polygon(0 0, 100% 0, 50% 100%);
}
.caret.up { clip-path: polygon(50% 0, 100% 100%, 0 100%); }
.caret-white { background: #fff; }
.caret-dim { background: #5a9f71; }
.caret-gap { margin-left: 8px; }

/* Title bar */
.titlebar { display: grid; grid-template-columns: 1fr auto 1fr; align-items: center; height: 26px; background: #298047; flex: none; }
.quick { display: flex; align-items: center; padding-left: 16px; }
.q-undo { margin-left: 22px; }
.q-undo + .caret { margin-left: 6px; }
.q-redo { margin-left: 12px; }
.q-redo + .caret { margin-left: 6px; }
.q-more { margin-left: 17px; }
.doc-title { margin: 0; font-size: 9px; font-weight: 400; color: #bfe0c9; }
.window-buttons { display: flex; justify-content: flex-end; gap: 27px; padding-right: 13px; }

/* Tabs */
.tabs { display: flex; height: 20px; background: #298047; color: #f2faf4; flex: none; }
.tab { padding: 0 11px 0 12px; }
.tab-file { width: 50px; padding: 0 16px 0 12px; }
.tab-active { background: #f1f1f1; color: #25733f; }
.tellme { display: flex; align-items: center; gap: 5px; padding-left: 11px; flex: 1; color: #a5d2b2; }
.tellme input { flex: 1; }
.tellme input::placeholder { color: #a5d2b2; }
.signin { padding: 0 8px; }
.share { gap: 3px; width: 59px; padding-right: 10px; background: #17672f; }

/* Ribbon */
.ribbon { display: flex; height: 73px; background: #f1f1f1; border-bottom: 1px solid #d2d2d2; flex: none; position: relative; }
.group { display: flex; flex-direction: column; padding-top: 2px; position: relative; }
.group::after { content: ""; position: absolute; right: 0; top: 3px; bottom: 3px; width: 1px; background: #d6d6d6; }
.g-clipboard { width: 127px; padding-left: 2px; }
.g-font { width: 165px; padding-left: 2px; }
.g-align { width: 211px; padding-left: 3px; }
.g-number { width: 112px; padding-left: 3px; }
.g-styles { width: 297px; padding-left: 3px; }
.g-cells { width: 109px; padding-left: 2px; }
.g-edit { width: 150px; padding-left: 6px; }
.content { display: flex; height: 58px; align-items: flex-start; flex: none; }
.group-label { position: relative; text-align: center; color: #5f5f5f; line-height: 12px; padding-right: 3px; }
.launch { position: absolute; right: 3px; top: 3px; }
.big { flex-direction: column; padding-top: 4px; justify-content: flex-start; }
.big > svg { margin-bottom: 2px; }
.big > .caret { margin-top: 5px; }
.big span .caret { margin-left: 3px; vertical-align: 2px; }
.w-paste { width: 36px; }
.w-cf { width: 58px; }
.w-ft { width: 44px; }
.w34 { width: 34px; }
.stack { display: grid; grid-template-rows: repeat(3, 18px); justify-items: start; padding: 1px 0 0 1px; }
.stack-edit { width: 70px; padding-left: 0; }
.small { gap: 2px; }
.rows { display: grid; grid-template-rows: 24px 24px; align-items: center; align-content: start; padding-top: 4px; }
.row { display: flex; align-items: center; }
.row .caret { margin-left: 2px; }
.w17 { width: 17px; height: 18px; }
.w18 { width: 18px; height: 18px; }
.on { background: #c6c6c6; }
.sel {
  appearance: none; height: 18px; border: 1px solid #c6c6c6; border-radius: 0; padding-left: 2px;
  background: linear-gradient(to bottom right, #666 50%, transparent 51%) no-repeat right 4px center / 3px 3px,
              linear-gradient(to bottom left, #666 50%, transparent 51%) no-repeat right 6px center / 3px 3px, #fff;
}
.sel-font { width: 90px; }
.sel-size { width: 34px; margin-right: 2px; }
.sel-num { width: 105px; }
.grow-a { font-size: 12px; font-weight: 600; }
.shrink-a { font-size: 10px; font-weight: 600; }
.letter { font-size: 10px; }
.letter i { font-family: "Liberation Serif", serif; font-weight: 700; font-size: 12px; }
.letter u { font-weight: 600; }
.sep { width: 1px; height: 16px; background: #d2d2d2; margin: 0 2px; }
.sep-l { margin: 0 4px 0 5px; }
.sep-r { margin-left: 15px; }
.sep-m { margin-left: 4px; }
.fontcolor { font-size: 12px; font-weight: 600; line-height: 12px; height: 14px; width: 14px; margin-left: 4px; border-bottom: 3px solid #d0021b; }
.text-btn { gap: 2px; margin-left: 2px; }
.pct { font-size: 12px; margin-left: 3px; }
.dec { flex-direction: column; font-size: 8px; line-height: 6px; font-weight: 600; }
.dec span { display: flex; align-items: center; }
.gallery { display: flex; flex: 1; margin: 2px 5px 0 2px; height: 50px; border: 1px solid #b9b9b9; background: #fff; font-size: 10px; }
.swatches { flex: 1; display: grid; grid-template-columns: 84px 1fr; grid-template-rows: 22px 22px; padding-top: 2px; }
.sw { justify-content: flex-start; margin: 2px; padding-left: 4px; }
.normal { border: 2px solid #b8b8b8; margin: 0; background: #fff; color: #222; }
.bad { background: #f9bfca; color: #a4101f; margin-top: 3px; }
.good { background: #c3f1ca; color: #1e7020; }
.neutral { background: #fbec9b; color: #97701a; }
.gal-scroll { display: grid; grid-template-rows: repeat(3, 1fr); width: 11px; border-left: 1px solid #c6c6c6; }
.gal-scroll .btn + .btn { border-top: 1px solid #c6c6c6; }
.gal-scroll .off { background: #e0e0e0; }
.gal-scroll .off .caret { background: #aaa; }
.collapse { margin: auto 8px 3px auto; }

/* Formula bar */
.formula-bar { display: flex; align-items: center; height: 38px; padding: 1px 4px 0 4px; flex: none; }
.namebox { width: 81px; height: 21px; font-size: 10px; padding-left: 4px; }
.dots { margin: 0 10px; }
.fx-buttons { display: flex; align-items: center; justify-content: space-around; width: 89px; height: 21px; background: #fdfdfd; border: 1px solid #c9c9c9; }
.fx { font: italic 700 12px/12px "Liberation Serif", serif; }
.fx small { font-size: 9px; }
.formula { display: flex; align-items: center; flex: 1; height: 21px; margin-left: 2px; padding-right: 2px; background: #fdfdfd; border: 1px solid #c9c9c9; }
.formula input { flex: 1; }

/* Grid */
.workbook { flex: 1; min-height: 0; display: flex; position: relative; border-bottom: 1px solid #a0a0a0; }
.sheet { flex: 1; overflow: hidden; border-right: 1px solid #a0a0a0; }
.grid { width: 100%; table-layout: fixed; border-collapse: separate; border-spacing: 0; background: #fff; font: 11px/12px Lato, sans-serif; color: #222; }
.c-h { width: 21px; } .c-a { width: 479px; } .c-b { width: 101px; } .c-c { width: 107px; } .c-f { width: 125px; }
.c-g { width: 122px; } .c-hh { width: 128px; } .c-i { width: 136px; }
.grid tr { height: 16px; }
.grid td { padding: 0; border-right: 1px solid #d6d7da; border-bottom: 1px solid #d0d1d4; text-align: center; white-space: nowrap; }
.grid th { position: relative; z-index: 1; padding: 0; background: #e6e6e6; font: 10px/12px "Open Sans", sans-serif; color: #444; border-bottom: 1px solid #c4c4c4; border-right: 1px solid #a0a0a0; vertical-align: bottom; }
.grid thead th { border-bottom-color: #a0a0a0; border-right-color: #bdbdbd; vertical-align: top; }
.grid .corner { border-right-color: #a0a0a0; }
.grid .last { padding-left: 7px; }
.corner svg { margin: 2px 0 0 8px; }
.grid .dbl { border-right: 2px solid #c9c9cb; }
.grid thead .dbl { border-right: 3px double #b0b0b0; }
.grid .r-title { height: 20px; }
.grid .tall { height: 36px; font: 700 25px/30px Lato, sans-serif; color: #111; }
.grid .tall th { padding-bottom: 6px; }
.grid .title { font-size: 13px; line-height: 16px; font-weight: 700; color: #c00018; text-align: left; padding-left: 5px; }
.heads td, .b { font-weight: 700; color: #111; }
.grid .y { background: #fdff00; border-color: #fdff00; box-shadow: -1px -1px #fdff00; }
.grid .c { background: #10bdec; border-color: #10bdec; box-shadow: -1px -1px #10bdec; }
.grid .g { background: #95e052; border-color: #95e052; box-shadow: -1px -1px #95e052; }
.grid .o { background: #e07832; border-color: #e07832; box-shadow: -1px -1px #e07832; }
.grid .r { background: #ec2400; border-color: #ec2400; box-shadow: -1px -1px #ec2400; }
.grid .flag { background-image: linear-gradient(135deg, #2b7a2b 3px, transparent 3px); }

.vscroll { width: 17px; padding: 1px 2px 0 3px; display: flex; flex-direction: column; }
.sb { width: 12px; height: 12px; background: #fff; border: 1px solid #b5b5b5; flex: none; }
.vtrack { flex: 1; background: #d6d6d6; }
.vthumb { height: 70%; background: #fff; border: 1px solid #b5b5b5; }

/* Ink drawn over the sheet */
.ink { position: absolute; left: 360px; top: 143px; pointer-events: none; }
.cursor { position: absolute; left: 391px; top: 197px; }
.nib { position: absolute; right: 23px; top: 98px; z-index: 2; }
.pen-tools { position: absolute; z-index: 2; right: 22px; top: 131px; width: 28px; padding: 2px; background: #fff; box-shadow: 0 0 6px #0006; }
.tool { width: 24px; height: 24px; position: relative; }
.lit { background: #3dcbe8; }
.more::after { content: ""; position: absolute; right: 0; bottom: 0; width: 5px; height: 5px; background: linear-gradient(135deg, transparent 50%, #222 51%); }
.dot::before { content: ""; position: absolute; right: 0; top: 1px; width: 6px; height: 6px; border-radius: 50%; background: #e0007f; }
.inks { display: grid; grid-template-columns: 12px 12px; grid-auto-rows: 12px; height: 48px; background: #000; }
.ink-cyan { background: #10bdec; } .ink-yellow { background: #fdff00; } .ink-pink { background: #f0008c; }

/* Sheet tabs */
.sheet-bar { display: flex; align-items: center; height: 22px; flex: none; padding-right: 17px; }
.sheet-nav { display: flex; gap: 19px; width: 80px; padding-left: 22px; }
.sheet-tab { align-self: flex-start; height: 20px; width: 155px; background: #fff; border: solid #b5b5b5; border-width: 0 1px; box-shadow: inset 0 -1px #217346; color: #217346; font-size: 10px; font-weight: 700; }
.add-sheet { margin-left: 26px; }
.hdots { margin-left: auto; margin-right: 11px; }
.hscroll { display: flex; width: 482px; }
.htrack { flex: 1; background: #d6d6d6; }
.hthumb { width: 93%; height: 12px; background: #fff; border: 1px solid #b5b5b5; }

/* Status bar */
.status { display: flex; align-items: center; height: 18px; background: #f1f1f1; border-top: 1px solid #d2d2d2; padding: 0 7px 0 5px; flex: none; }
.ready { margin-right: auto; }
.view { width: 31px; height: 17px; }
.zoom-b { width: 10px; }
.zoom { appearance: none; width: 82px; height: 10px; background: linear-gradient(#aaa, #aaa) no-repeat center / 100% 1px; }
.zoom::-webkit-slider-thumb { appearance: none; width: 3px; height: 9px; background: #666; }
.zoom-pct { width: 32px; text-align: right; }

/* Taskbar */
.taskbar { display: flex; height: 32px; background: #212121; color: #f2f2f2; font-size: 11px; flex: none; }
.start { width: 38px; }
.search { display: flex; align-items: center; width: 231px; background: #f2f2f2; padding: 0 5px 0 10px; gap: 8px; color: #444; }
.search input { flex: 1; }
.search input::placeholder { color: #444; }
.apps { display: flex; padding-left: 1px; }
.app { width: 39px; position: relative; }
.run::after { content: ""; position: absolute; left: 4px; right: 4px; bottom: 0; height: 2px; background: #7fb8e4; }
.dhan { width: 20px; height: 20px; border-radius: 50%; background: #2c9d67; color: #fff; font: 12px/20px "Noto Sans", sans-serif; }
.tray { display: flex; margin-left: auto; gap: 8px; padding-right: 2px; }
.weather { position: relative; gap: 6px; margin-right: 10px; }
.badge { position: absolute; left: 11px; top: 5px; font-size: 8px; line-height: 10px; font-weight: 700; }
.lang { font-size: 10px; }
.clock { flex-direction: column; font-size: 9px; line-height: 14px; width: 50px; }
.notif { width: 37px; padding-right: 9px; border-right: 1px solid #777; }
```
